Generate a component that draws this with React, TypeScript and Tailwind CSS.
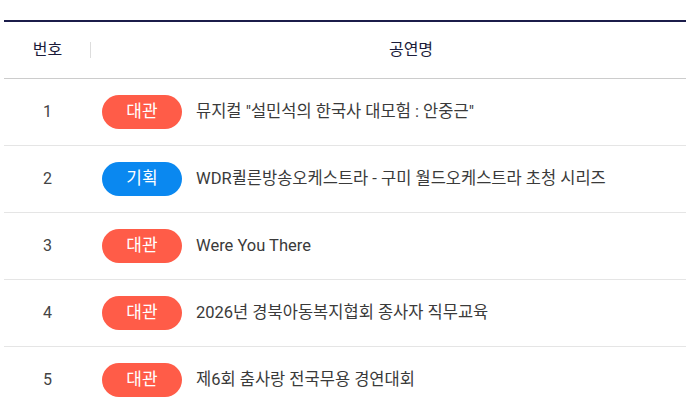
const rows = [
  { no: 1, type: "대관", title: '뮤지컬 "설민석의 한국사 대모험 : 안중근"' },
  { no: 2, type: "기획", title: "WDR퀼른방송오케스트라 - 구미 월드오케스트라 초청 시리즈" },
  { no: 3, type: "대관", title: "Were You There" },
  { no: 4, type: "대관", title: "2026년 경북아동복지협회 종사자 직무교육" },
  { no: 5, type: "대관", title: "제6회 춤사랑 전국무용 경연대회" },
];

export default function App() {
  return (
    <div
      className="h-[413px] w-[686px] overflow-hidden bg-white pl-1 pt-5"
      style={{ fontFamily: 'Roboto, "Noto Sans CJK KR", sans-serif' }}
    >
      <div className="w-[727px] border-t-2 border-[#1b1c4a]">
        <div className="flex h-[57px] items-center border-b border-[#cccccc] text-[16px] text-[#1b1c3a]">
          <div className="relative flex w-[87px] justify-center">
            번호
            <span className="absolute right-0 top-1/2 h-4 w-px -translate-y-1/2 bg-[#dddddd]" />
          </div>
          <div className="flex w-[640px] justify-center">공연명</div>
        </div>
        {rows.map((r) => (
          <div
            key={r.no}
            className="flex h-[67px] items-center border-b border-[#e5e5e5] text-[16.5px] text-[#3a3a3a]"
          >
            <div className="flex w-[87px] justify-center text-[16px] text-[#444444]">{r.no}</div>
            <div className="flex items-center pl-[11px]">
              <span
                className={`flex h-[34px] w-[80px] items-center justify-center rounded-full text-[17px] text-white ${
                  r.type === "기획" ? "bg-[#0a88f0]" : "bg-[#ff5c48]"
                }`}
              >
                {r.type}
              </span>
              <span className="ml-[14px]">{r.title}</span>
            </div>
          </div>
        ))}
      </div>
    </div>
  );
}
